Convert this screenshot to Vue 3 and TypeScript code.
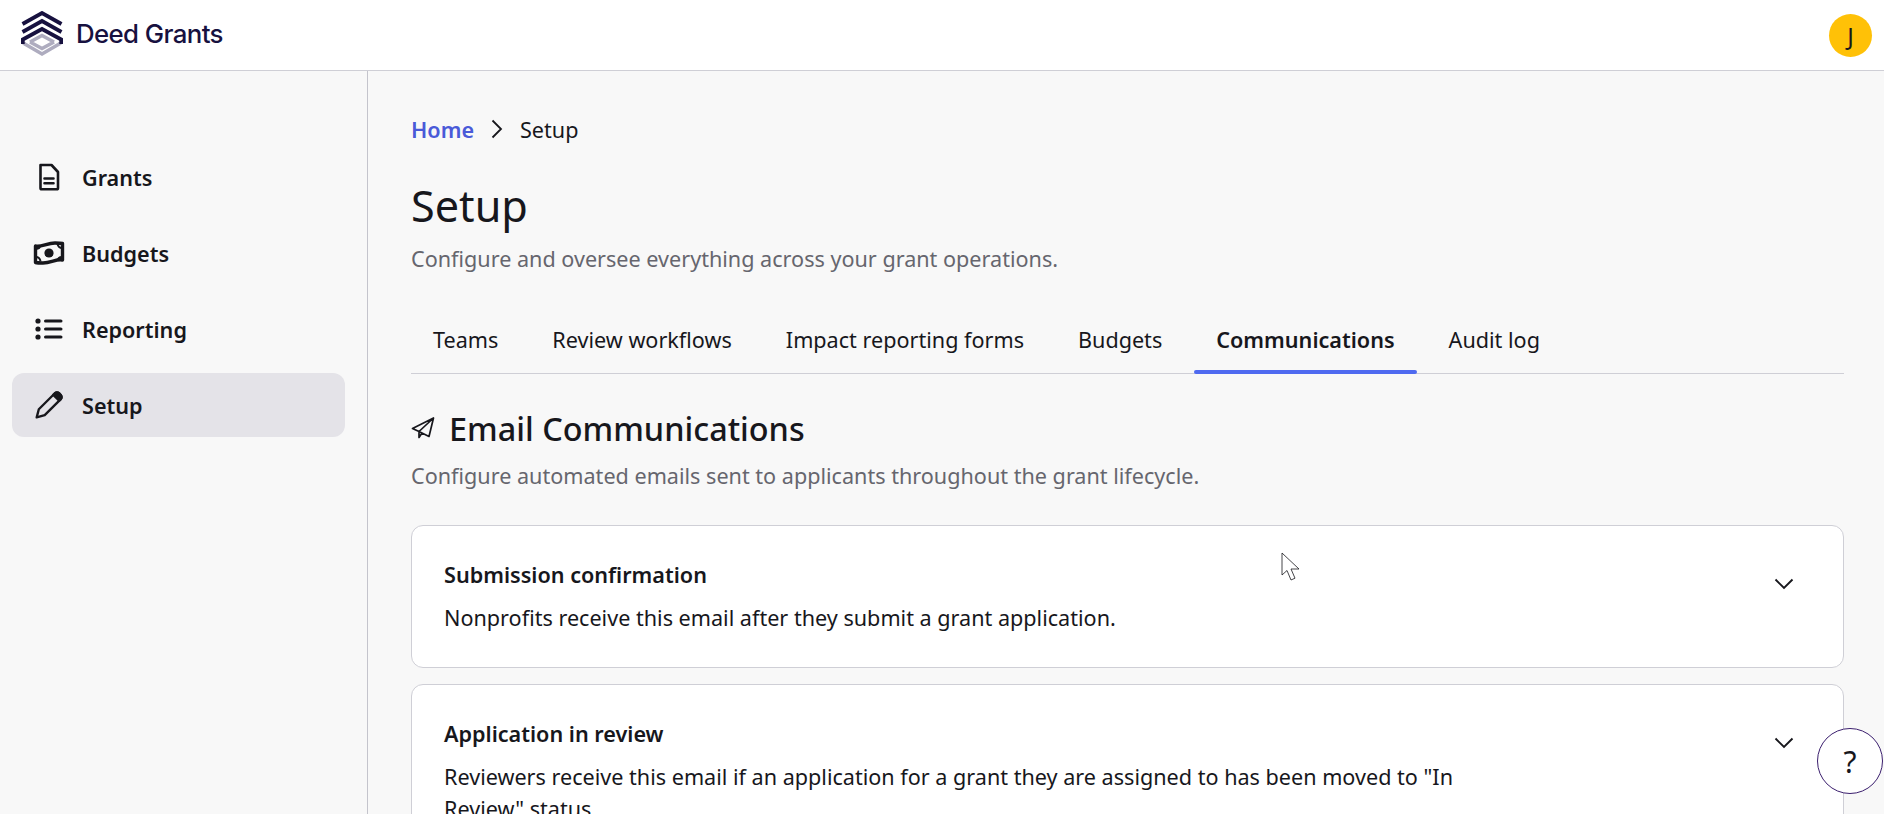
<template>
  <div class="page">
    <header class="topbar">
      <div class="brand">
        <svg class="logo" width="42" height="46" viewBox="0 0 42 46" fill="none">
          <path d="M3 32.5 L21 43 L39 32.5 M9 31 L21 24.5 L33 31 M3 33.5 V31 M39 33.5 V31 M9 31 L21 37.5 L33 31" stroke="#aeacbf" stroke-width="3.6" />
          <path d="M1.5 13 L21 2 L40.5 13 M1.5 21 L21 10 L40.5 21 M1.8 33 V28.5 L21 18 L40.2 28.5 V33" stroke="#17113f" stroke-width="3.8" />
        </svg>
        <span class="brand-name">Deed Grants</span>
      </div>
      <div class="avatar">J</div>
    </header>

    <div class="body">
      <nav class="sidebar">
        <a v-for="item in navItems" :key="item.label" class="nav-item" :class="{ active: item.label === 'Setup' }">
          <span class="nav-icon">
            <svg v-if="item.icon === 'doc'" width="24" height="28" viewBox="0 0 24 28" fill="none" stroke="#17171c" stroke-width="2.6" stroke-linejoin="round">
              <path d="M3.5 2 H14.5 L21 9 V25 Q21 26.3 19.7 26.3 H4.8 Q3.5 26.3 3.5 25 Z" />
              <path d="M7.5 15.5 H16.5 M7.5 20.3 H16.5" stroke-linecap="round" />
            </svg>
            <svg v-else-if="item.icon === 'money'" width="32" height="26" viewBox="0 0 32 26" fill="none">
              <path d="M2.5 6 C8 7.5 14 3 22 3 C25 3 27.5 3 29.5 3.5 V20 C24 18.5 18 23 10 23 C7 23 4.5 23 2.5 22.5 Z" stroke="#17171c" stroke-width="3.4" stroke-linejoin="round" />
              <path d="M3 9 Q7 9 7.5 5 M29 17 Q25 17 24.5 21 M3 17 Q6.5 17 7.5 21 M29 8 Q25.5 8 24.5 4" stroke="#17171c" stroke-width="2" />
              <circle cx="16" cy="13" r="4.6" fill="#17171c" />
            </svg>
            <svg v-else-if="item.icon === 'list'" width="28" height="24" viewBox="0 0 28 24" fill="#17171c">
              <circle cx="3" cy="4" r="2.6" />
              <circle cx="3" cy="12" r="2.6" />
              <circle cx="3" cy="20" r="2.6" />
              <rect x="9" y="2.4" width="18.5" height="3.2" rx="1.6" />
              <rect x="9" y="10.4" width="18.5" height="3.2" rx="1.6" />
              <rect x="9" y="18.4" width="18.5" height="3.2" rx="1.6" />
            </svg>
            <svg v-else width="30" height="30" viewBox="0 0 28 28" fill="none" stroke="#17171c" stroke-width="2.2" stroke-linejoin="round">
              <path d="M2.5 25.5 L4.5 18 L19.5 3 Q21.5 1.5 23.7 3.3 L24.8 4.4 Q26.5 6.5 25 8.5 L10 23.5 Z" />
              <path d="M18 4.5 L19.5 3 Q21.5 1.5 23.7 3.3 L24.8 4.4 Q26.5 6.5 25 8.5 L23.5 10 Z" fill="#17171c" />
            </svg>
          </span>
          <span>{{ item.label }}</span>
        </a>
      </nav>

      <main class="content">
        <div class="crumbs">
          <a class="crumb-link">Home</a>
          <svg width="14" height="20" viewBox="0 0 14 20" fill="none" stroke="#17171c" stroke-width="1.8">
            <path d="M2.5 1.5 L11 10 L2.5 18.5" />
          </svg>
          <span>Setup</span>
        </div>

        <h1>Setup</h1>
        <p class="muted intro">Configure and oversee everything across your grant operations.</p>

        <div class="tabs">
          <div v-for="tab in tabs" :key="tab" class="tab" :class="{ active: tab === 'Communications' }">{{ tab }}</div>
        </div>

        <div class="section-title">
          <svg width="24" height="24" viewBox="0 0 24 24" fill="none" stroke="#17171c" stroke-width="1.7" stroke-linejoin="round">
            <path d="M22.5 2 L1.5 12.5 L8 15.5 L22.5 2 L18 20.5 L11 17 L8 15.5 V21.5 L11 17" />
          </svg>
          <h2>Email Communications</h2>
        </div>
        <p class="muted section-sub">Configure automated emails sent to applicants throughout the grant lifecycle.</p>

        <div class="cards">
          <section v-for="card in cards" :key="card.title" class="card">
            <div class="card-text">
              <h3>{{ card.title }}</h3>
              <p>{{ card.text }}</p>
            </div>
            <svg class="chev" width="22" height="14" viewBox="0 0 22 14" fill="none" stroke="#17171c" stroke-width="1.9">
              <path d="M2.5 2.5 L11 11 L19.5 2.5" />
            </svg>
          </section>
        </div>
      </main>
    </div>

    <button class="help">?</button>

    <svg class="cursor" width="20" height="30" viewBox="0 0 20 30">
      <path d="M1 1 V23 L6 18.5 L10 28 L14 26.2 L10 17 H18 Z" fill="#fff" stroke="#17171c" stroke-width="0.8" stroke-linejoin="round" />
    </svg>
  </div>
</template>

<script setup lang="ts">
interface NavItem {
  label: string
  icon: 'doc' | 'money' | 'list' | 'pen'
}

const navItems: NavItem[] = [
  { label: 'Grants', icon: 'doc' },
  { label: 'Budgets', icon: 'money' },
  { label: 'Reporting', icon: 'list' },
  { label: 'Setup', icon: 'pen' },
]

const tabs = ['Teams', 'Review workflows', 'Impact reporting forms', 'Budgets', 'Communications', 'Audit log']

const cards = [
  {
    title: 'Submission confirmation',
    text: 'Nonprofits receive this email after they submit a grant application.',
  },
  {
    title: 'Application in review',
    text: 'Reviewers receive this email if an application for a grant they are assigned to has been moved to "In Review" status.',
  },
]
</script>

<style>
html,
body {
  margin: 0;
  height: 100%;
  overflow: hidden;
}
</style>

<style scoped>
.page {
  position: relative;
  height: 814px;
  overflow: hidden;
  background: #f8f8f8;
  color: #17171c;
  font-family: 'Noto Sans', sans-serif;
  font-size: 21.6px;
}

.topbar {
  display: flex;
  justify-content: space-between;
  align-items: center;
  height: 70px;
  padding: 0 12px 0 21px;
  background: #fff;
  border-bottom: 1px solid #cfcfd6;
}

.brand {
  display: flex;
  align-items: center;
  gap: 13px;
}

.logo {
  margin-bottom: 2px;
}

.brand-name {
  padding-bottom: 4px;
  font-family: Inter, sans-serif;
  font-size: 25.8px;
  font-weight: 500;
  letter-spacing: -0.6px;
  color: #17113f;
}

.avatar {
  display: flex;
  align-items: center;
  justify-content: center;
  width: 43px;
  height: 43px;
  border-radius: 50%;
  background: #ffc107;
  font-size: 24px;
}

.body {
  display: flex;
  height: 743px;
}

.sidebar {
  display: flex;
  flex-direction: column;
  gap: 12px;
  width: 368px;
  flex: none;
  box-sizing: border-box;
  padding: 74px 22px 0 12px;
  border-right: 1px solid #c4c4cc;
}

.nav-item {
  display: flex;
  align-items: center;
  height: 64px;
  padding-left: 21px;
  border-radius: 12px;
  font-size: 21.6px;
  font-weight: 600;
}

.nav-item.active {
  background: #e4e3e8;
}

.nav-icon {
  display: flex;
  align-items: center;
  justify-content: center;
  width: 32px;
  margin-right: 17px;
}

.content {
  flex: 1;
  padding: 34px 40px 0 43px;
  min-width: 0;
}

.crumbs {
  display: flex;
  align-items: center;
  gap: 16px;
  height: 48px;
}

.crumb-link {
  color: #4a5ad8;
  font-weight: 600;
}

h1 {
  margin: 23px 0 0;
  font-size: 43.2px;
  font-weight: 400;
  line-height: 60px;
}

.muted {
  margin: 0;
  color: #66666e;
  line-height: 32px;
}

.intro {
  margin-top: 7px;
}

.tabs {
  display: flex;
  gap: 10px;
  box-sizing: border-box;
  height: 64px;
  margin-top: 35px;
  border-bottom: 1px solid #cfcfd6;
}

.tab {
  position: relative;
  padding: 14px 22px 0;
  line-height: 32px;
}

.tab.active {
  font-weight: 600;
}

.tab.active::after {
  content: '';
  position: absolute;
  left: 0;
  right: 0;
  bottom: -1px;
  height: 4px;
  border-radius: 2px;
  background: #4f6af0;
}

.section-title {
  display: flex;
  align-items: center;
  gap: 14px;
  margin-top: 30px;
}

h2 {
  margin: 0;
  font-size: 32.4px;
  font-weight: 500;
  line-height: 48px;
}

.section-sub {
  margin-top: 8px;
}

.cards {
  display: flex;
  flex-direction: column;
  gap: 16px;
  margin-top: 33px;
}

.card {
  display: flex;
  align-items: flex-start;
  justify-content: space-between;
  box-sizing: border-box;
  min-height: 143px;
  padding: 33px 48px 31px 32px;
  background: #fff;
  border: 1px solid #cfcfd6;
  border-radius: 12px;
}

.card-text {
  max-width: 1040px;
}

h3 {
  margin: 0 0 11px;
  font-size: 21.6px;
  font-weight: 600;
  line-height: 32px;
}

.card p {
  margin: 0;
  line-height: 32.4px;
}

.chev {
  margin-top: 18px;
}

.help {
  position: absolute;
  left: 1817px;
  top: 728px;
  width: 66px;
  height: 66px;
  padding: 0;
  border: 1.5px solid #3b1f6e;
  border-radius: 50%;
  background: #fff;
  color: #17171c;
  font-family: 'Noto Sans', sans-serif;
  font-size: 30px;
}

.cursor {
  position: absolute;
  left: 1281px;
  top: 552px;
}
</style>
